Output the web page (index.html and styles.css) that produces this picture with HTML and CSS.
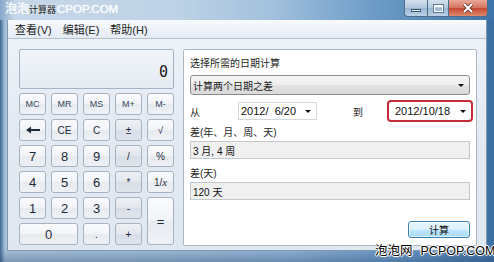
FILE: index.html
```html
<!DOCTYPE html>
<html lang="zh-CN">
<head>
  <meta charset="UTF-8">
  <title>计算器</title>
  <link rel="stylesheet" href="styles.css">
</head>
<body>
  <div class="window">
    <div class="titlebar">
      <span class="mark-top">泡泡</span>
      <span class="title">计算器</span>
      <span class="mark-top mark-top-en">CPOP.COM</span>
      <div class="caption">
        <span class="cap cap-min"><i class="min-bar"></i></span>
        <span class="cap cap-max"><i class="max-box"></i></span>
        <span class="cap cap-close">
          <svg width="12" height="10" viewBox="0 0 12 10"><path d="M2 1 L10 9 M10 1 L2 9" stroke="#4a2a22" stroke-width="3.4" fill="none"/><path d="M2 1 L10 9 M10 1 L2 9" stroke="#fff" stroke-width="2" fill="none"/></svg>
        </span>
      </div>
    </div>

    <div class="frame">
      <div class="menubar">
        <span>查看(V)</span>
        <span>编辑(E)</span>
        <span>帮助(H)</span>
      </div>

      <div class="client">
        <div class="calc">
          <div class="display">0</div>
          <div class="keys">
            <span class="key mem">MC</span>
            <span class="key mem">MR</span>
            <span class="key mem">MS</span>
            <span class="key mem">M+</span>
            <span class="key mem">M-</span>

            <span class="key">
              <svg width="14" height="8" viewBox="0 0 14 8"><path d="M0 4 L5 0.5 L5 7.5 Z" fill="#1e2a38"/><path d="M4 4 H14" stroke="#1e2a38" stroke-width="2"/></svg>
            </span>
            <span class="key">CE</span>
            <span class="key">C</span>
            <span class="key op">±</span>
            <span class="key">√</span>

            <span class="key num">7</span>
            <span class="key num">8</span>
            <span class="key num">9</span>
            <span class="key op">/</span>
            <span class="key">%</span>

            <span class="key num">4</span>
            <span class="key num">5</span>
            <span class="key num">6</span>
            <span class="key op">*</span>
            <span class="key recip">1/<em>x</em></span>

            <span class="key num">1</span>
            <span class="key num">2</span>
            <span class="key num">3</span>
            <span class="key op">-</span>
            <span class="key num equals">=</span>

            <span class="key num zero">0</span>
            <span class="key">.</span>
            <span class="key op">+</span>
          </div>
        </div>

        <div class="panel">
          <div class="label">选择所需的日期计算</div>
          <div class="combo">
            <span>计算两个日期之差</span>
            <i class="arrow"></i>
          </div>
          <div class="date-row">
            <span class="row-label">从</span>
            <div class="picker">
              <span class="date">2012/  6/20</span>
              <i class="arrow"></i>
            </div>
            <span class="row-label to">到</span>
            <div class="picker marked">
              <span class="date">2012/10/18</span>
              <i class="arrow"></i>
            </div>
          </div>
          <div class="label gap-s">差(年、月、周、天)</div>
          <div class="field">3 月, 4 周</div>
          <div class="label gap-l">差(天)</div>
          <div class="field">120 天</div>
          <div class="button">计算</div>
        </div>
      </div>
    </div>

    <div class="mark-bottom">泡泡网<span class="mark-en">PCPOP.COM</span></div>
  </div>
</body>
</html>
```

FILE: styles.css
```css
* {
  box-sizing: border-box;
}

html, body {
  margin: 0;
  padding: 0;
}

body {
  width: 494px;
  height: 262px;
  overflow: hidden;
  font-family: "Liberation Sans", "Noto Sans CJK SC", sans-serif;
  color: #1e1e1e;
}

.window {
  position: relative;
  width: 494px;
  height: 262px;
  display: flex;
  flex-direction: column;
  padding-bottom: 11px;
  background:
    linear-gradient(180deg, rgba(255,255,255,0) 0, rgba(255,255,255,0) 95%, rgba(40,70,110,.35) 100%),
    linear-gradient(90deg, #3e6891 0, #a9c2da 5px, #9fbcd7 30%, #8db0d2 60%, #5f90bf 85%, #3b6fa3 100%);
}

/* title bar */
.titlebar {
  height: 20px;
  display: flex;
  align-items: flex-start;
  padding-left: 5px;
  background: linear-gradient(90deg, #86a8c8 0, #c5d7e8 3%, #bed3e6 35%, #a2c1dd 55%, #6f9dc8 75%, #3d74aa 100%);
}

.mark-top {
  margin-top: 2px;
  font-size: 12px;
  line-height: 15px;
  color: #fff;
  white-space: nowrap;
  text-shadow: 0 0 1px rgba(255,255,255,.8);
}

.mark-top-en {
  margin-left: 1px;
  font-size: 11.5px;
}

.title {
  margin-top: 4px;
  font-size: 9px;
  line-height: 12px;
  color: #141414;
  text-shadow: 0 0 3px #fff;
}

.caption {
  display: flex;
  margin-left: auto;
  margin-right: 6px;
  height: 17px;
}

.cap {
  display: flex;
  align-items: center;
  justify-content: center;
  height: 17px;
  border: 1px solid #4f6d8c;
  border-top: 0;
}

.cap-min {
  width: 23px;
  border-radius: 0 0 0 4px;
  border-right: 0;
  background: linear-gradient(#d5e2ee, #b1c8de 50%, #98b6d3 51%, #bcd1e4);
}

.cap-max {
  width: 22px;
  background: linear-gradient(#d5e2ee, #b1c8de 50%, #98b6d3 51%, #bcd1e4);
}

.cap-close {
  width: 39px;
  border-left: 0;
  border-radius: 0 0 4px 0;
  background: linear-gradient(#e8a797, #d6735f 50%, #c7472f 51%, #dd8a6c);
}

.min-bar {
  display: block;
  width: 10px;
  height: 3px;
  margin-top: 5px;
  background: #fff;
  border: 1px solid #3d5670;
}

.max-box {
  display: block;
  width: 9px;
  height: 7px;
  border: 1px solid #fff;
  border-top-width: 2px;
  box-shadow: 0 0 0 1px #5d7895;
}

/* watermark over the bottom edge */
.mark-bottom {
  position: absolute;
  z-index: 3;
  left: 375px;
  top: 244px;
  white-space: nowrap;
  font-size: 12.5px;
  line-height: 15px;
  color: #000;
  text-shadow: 1px 0 0 #fff, -1px 0 0 #fff, 0 1px 0 #fff, 0 -1px 0 #fff, 0 0 3px #fff;
}

.mark-en {
  margin-left: 8px;
}

/* window body */
.frame {
  flex: 1;
  margin: 0 7px;
  display: flex;
  flex-direction: column;
  border: 1px solid #7f97b0;
  border-top: 0;
}

.menubar {
  height: 19px;
  display: flex;
  align-items: center;
  gap: 11px;
  padding-left: 7px;
  font-size: 11px;
  border-bottom: 1px solid #b3c0ce;
  background: linear-gradient(#f8fafd, #e3ebf4);
}

.client {
  flex: 1;
  display: flex;
  gap: 9px;
  padding: 10px 9px 4px 11px;
  background: linear-gradient(#edf2f8, #e3eaf2 40%, #dfe7f0);
}

/* calculator */
.calc {
  width: 155px;
}

.display {
  height: 40px;
  display: flex;
  justify-content: flex-end;
  align-items: flex-end;
  padding: 0 5px 9px;
  border: 1px solid #a4b4c6;
  border-radius: 2px;
  background: linear-gradient(#f1f5f9, #e4ebf2);
  font-family: "DejaVu Sans Mono", "Liberation Mono", monospace;
  font-size: 15px;
  line-height: 14px;
  color: #1a1a1a;
}

.keys {
  display: grid;
  grid-template-columns: repeat(5, 27px);
  grid-template-rows: repeat(6, 22px);
  column-gap: 5px;
  row-gap: 4px;
  margin-top: 4px;
}

.key {
  display: flex;
  align-items: center;
  justify-content: center;
  border: 1px solid #a7b2c0;
  border-radius: 3px;
  background: linear-gradient(#fafbfd, #f1f4f7 50%, #e7ebf0 51%, #eef1f5);
  font-size: 10px;
  color: #1e2a38;
}

.key.mem {
  font-size: 9px;
  color: #34475e;
}

.key.op {
  background: linear-gradient(#eef1f5, #e2e7ed 50%, #d8dee6 51%, #e0e5eb);
}

.key.num {
  font-size: 13px;
}

.recip em {
  font-family: "Liberation Serif", serif;
  font-size: 11px;
}

.equals {
  grid-row: span 2;
  font-size: 15px;
}

.zero {
  grid-column: span 2;
}

/* date panel */
.panel {
  flex: 1;
  display: flex;
  flex-direction: column;
  padding: 7px 6px;
  border: 1px solid #a9b6c4;
  border-radius: 2px;
  background: #fff;
  font-size: 10px;
}

.label {
  line-height: 14px;
  color: #262626;
}

.gap-s {
  margin-top: 4px;
}

.gap-l {
  margin-top: 8px;
}

.arrow {
  display: block;
  width: 0;
  height: 0;
  border-left: 3px solid transparent;
  border-right: 3px solid transparent;
  border-top: 3px solid #111;
}

.combo {
  height: 20px;
  margin-top: 4px;
  display: flex;
  align-items: center;
  justify-content: space-between;
  padding: 0 5px 0 2px;
  border: 1px solid #8a8a8a;
  border-radius: 3px;
  background: linear-gradient(#f6f6f6, #eeeeee 50%, #e2e2e2 51%, #dadada);
}

.date-row {
  height: 22px;
  margin-top: 5px;
  display: flex;
  align-items: center;
}

.row-label {
  width: 48px;
}

.row-label.to {
  width: auto;
  margin-left: 36px;
}

.picker {
  width: 79px;
  height: 18px;
  display: flex;
  align-items: center;
  justify-content: space-between;
  padding: 0 5px 0 2px;
  border: 1px solid #d4d8dd;
  background: #fff;
}

.picker.marked {
  width: 86px;
  height: 22px;
  margin-left: auto;
  margin-right: -3px;
  padding: 0 5px 0 6px;
  border: 2px solid #c42c39;
  border-radius: 4px;
}

.date {
  font-size: 11px;
  white-space: pre;
  color: #111;
}

.field {
  height: 18px;
  margin-top: 1px;
  display: flex;
  align-items: center;
  padding-left: 2px;
  border: 1px solid #c3c8ce;
  background: #f0f0f0;
  color: #111;
}

.button {
  width: 62px;
  height: 17px;
  margin-top: auto;
  align-self: flex-end;
  display: flex;
  align-items: center;
  justify-content: center;
  border: 1px solid #3c7fb1;
  border-radius: 3px;
  background: linear-gradient(#eaf6fd, #d9f0fc 50%, #bee6fd 51%, #a7d9f5);
  box-shadow: inset 0 0 0 1px rgba(255,255,255,.6);
  color: #111;
}
```
